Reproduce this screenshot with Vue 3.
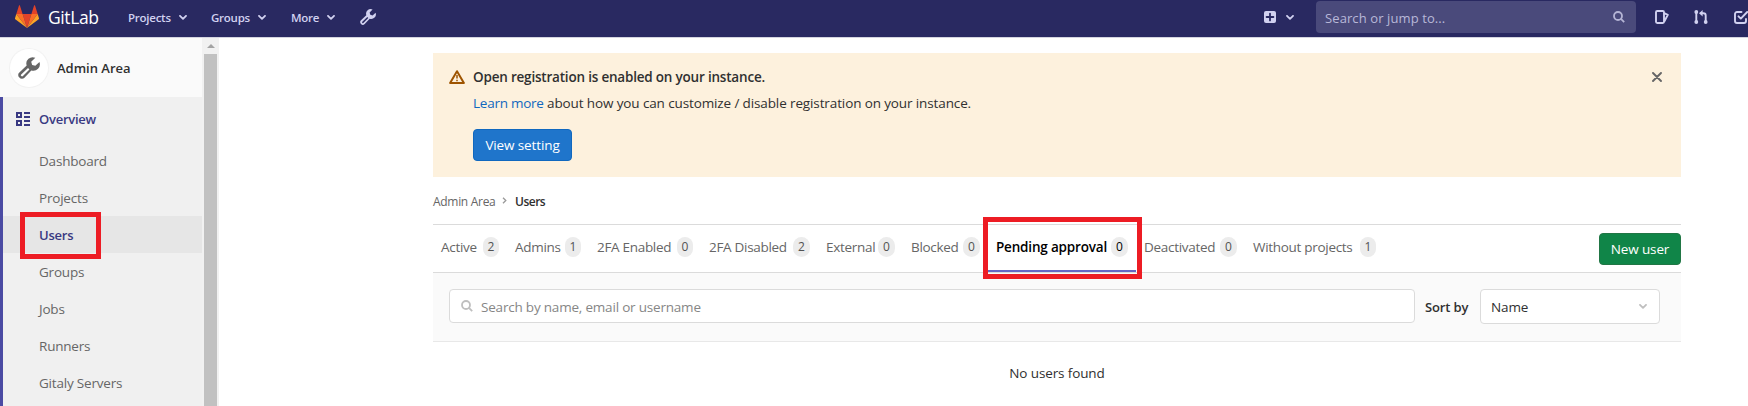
<script setup>
const menus = [
  { label: 'Projects', cls: 'm-projects' },
  { label: 'Groups', cls: 'm-groups' },
  { label: 'More', cls: 'm-more' },
]
const items = ['Dashboard', 'Projects', 'Users', 'Groups', 'Jobs', 'Runners', 'Gitaly Servers']
const tabs = [
  { label: 'Active', count: 2, width: 74, badge: 16 },
  { label: 'Admins', count: 1, width: 82, badge: 16 },
  { label: '2FA Enabled', count: 0, width: 112, badge: 16 },
  { label: '2FA Disabled', count: 2, width: 117, badge: 17 },
  { label: 'External', count: 0, width: 85, badge: 17 },
  { label: 'Blocked', count: 0, width: 85, badge: 17 },
  { label: 'Pending approval', count: 0, width: 148, badge: 17, active: true },
  { label: 'Deactivated', count: 0, width: 109, badge: 17 },
  { label: 'Without projects', count: 1, width: 139, badge: 16 },
]
const wrench =
  'M12.6 .6 A4.6 4.6 0 0 0 6.3 6.2 L1 11.3 A2.3 2.3 0 0 0 1 14.9 A2.5 2.5 0 0 0 4.7 15 L9.7 9.8 A4.7 4.7 0 0 0 15.6 3.7 L12.6 6.4 L10.3 5.8 L9.6 3.4 Z M7.3 8 L8.3 9 L3.6 13.8 A.8 .8 0 0 1 2.3 12.7 Z'
</script>

<template>
  <div class="app">
    <header class="nav">
      <svg class="logo" viewBox="0 0 24 23">
        <path fill="#e24329" d="M12 23 16.4 9.1H7.6z" />
        <path fill="#fc6d26" d="M12 23 7.6 9.1H1.3z" />
        <path fill="#fca326" d="M1.3 9.1 0 13.3c-.1.4 0 .8.3 1L12 23z" />
        <path fill="#e24329" d="M1.3 9.1h6.3L4.9.5c-.1-.4-.7-.4-.9 0z" />
        <path fill="#fc6d26" d="M12 23 16.4 9.1h6.3z" />
        <path fill="#fca326" d="M22.7 9.1 24 13.3c.1.4 0 .8-.3 1L12 23z" />
        <path fill="#e24329" d="M22.7 9.1h-6.3L19.1.5c.1-.4.7-.4.9 0z" />
      </svg>
      <span class="brand">GitLab</span>
      <a v-for="m in menus" :key="m.label" class="menu" :class="m.cls">
        <span>{{ m.label }}</span>
        <svg class="chev" viewBox="0 0 8 5"><path d="M1 .9 4 3.8 7 .9" /></svg>
      </a>
      <svg class="nav-wrench" viewBox="0 0 16 16"><path fill-rule="evenodd" :d="wrench" /></svg>
      <div class="nav-right">
        <svg class="plus" viewBox="0 0 12 12">
          <rect width="12" height="12" rx="2" fill="#d1d1f0" />
          <path d="M6 2.6v6.8M2.6 6h6.8" stroke="#292961" stroke-width="1.8" stroke-linecap="round" />
        </svg>
        <svg class="chev" viewBox="0 0 8 5"><path d="M1 .9 4 3.8 7 .9" /></svg>
        <div class="jump">
          <span>Search or jump to...</span>
          <svg class="mag" viewBox="0 0 12 12"><circle cx="5" cy="5" r="4" /><path d="m8.2 8.2 3 3" /></svg>
        </div>
        <svg class="tool" viewBox="0 0 14 14">
          <path d="M2.2 1h5.6a1.2 1.2 0 0 1 1.2 1.2v9.6A1.2 1.2 0 0 1 7.800 13H2.200A1.200 1.200 0 0 1 1 11.800V2.200A1.200 1.200 0 0 1 2.200 1zM9.200 3.200l3.600 1.600-3.400 6.600" />
        </svg>
        <svg class="tool merge" viewBox="0 0 14 14">
          <path d="M2.300 2v10M6.500 3.300H9.500a2.200 2.200 0 0 1 2.200 2.200V12" />
          <path class="solid" d="M8.600 0v6.600L5.200 3.300z" />
          <circle class="solid" cx="2.300" cy="2" r="1.900" /><circle class="solid" cx="2.300" cy="12" r="1.900" />
          <circle class="solid" cx="11.700" cy="12" r="1.900" />
        </svg>
        <svg class="tool todo" viewBox="0 0 14 14">
          <path d="M7.500 2H3a2 2 0 0 0-2 2v7a2 2 0 0 0 2 2h7a2 2 0 0 0 2-2V9M4.500 6.300l2.300 2.300L13.200 2" />
        </svg>
      </div>
    </header>

    <div class="body">
      <aside class="side">
        <div class="context">
          <span class="avatar"><svg viewBox="0 0 16 16"><path fill-rule="evenodd" :d="wrench" /></svg></span>
          <span class="context-name">Admin Area</span>
        </div>
        <nav class="menu-list">
          <a class="overview">
            <svg viewBox="0 0 14 14">
              <path d="M1 1h4v4H1zM1 9h4v4H1z" />
              <path d="M8 1h6M8 5h6M8 9h6M8 13h6" />
            </svg>
            <span>Overview</span>
          </a>
          <a v-for="i in items" :key="i" class="item" :class="{ on: i === 'Users' }">{{ i }}</a>
        </nav>
        <div class="mark mark-side"></div>
      </aside>
      <div class="scroll"><i class="up"></i><div class="thumb"></div></div>

      <main class="main">
        <section class="alert">
          <svg class="warn" viewBox="0 0 16 14">
            <path d="M8 1.200 14.900 13H1.100z" fill="none" stroke="#9e5400" stroke-width="2" stroke-linejoin="round" />
            <path d="M8 5v3.600M8 9.800v1.500" stroke="#9e5400" stroke-width="1.500" />
          </svg>
          <div class="alert-body">
            <h2>Open registration is enabled on your instance.</h2>
            <p><a>Learn more</a> about how you can customize / disable registration on your instance.</p>
            <button class="btn blue">View setting</button>
          </div>
          <svg class="close" viewBox="0 0 10 10"><path d="m1 1 8 8M9 1 1 9" /></svg>
        </section>

        <div class="crumbs">
          <span class="c-area">Admin Area</span>
          <svg viewBox="0 0 5 7"><path d="M1 .7 3.800 3.500 1 6.300" /></svg>
          <b>Users</b>
        </div>

        <div class="tabs">
          <a v-for="t in tabs" :key="t.label" class="tab" :class="{ active: t.active }" :style="{ width: t.width + 'px' }">
            <span>{{ t.label }}</span><i class="badge" :style="{ width: t.badge + 'px' }">{{ t.count }}</i>
          </a>
          <button class="btn green">New user</button>
          <div class="mark mark-tab"></div>
        </div>

        <div class="filter">
          <div class="search">
            <svg class="mag" viewBox="0 0 12 12"><circle cx="5" cy="5" r="4" /><path d="m8.200 8.200 3 3" /></svg>
            <span>Search by name, email or username</span>
          </div>
          <span class="sort">Sort by</span>
          <div class="select">
            <span>Name</span>
            <svg class="chev" viewBox="0 0 8 5"><path d="M1 .9 4 3.800 7 .9" /></svg>
          </div>
        </div>
        <p class="empty">No users found</p>
      </main>
    </div>
  </div>
</template>

<style>
body { margin: 0; overflow: hidden; }
</style>

<style scoped>
* { box-sizing: border-box; }
.app { width: 1748px; height: 406px; overflow: hidden; background: #fff; color: #303030; font: 13.5px/20px "Open Sans", "Noto Sans", sans-serif; letter-spacing: -0.12px; }
.app span, .app a, .app button { white-space: nowrap; }
svg { display: block; flex: none; }
.nav { height: 38px; background: #292961; border-bottom: 1px solid #d4d4df; display: flex; align-items: center; color: #d1d1f0; padding: 0 0 5px 15px; }
.logo { width: 24px; height: 23px; }
.brand { width: 52px; margin-left: 9px; padding-top: 1px; font-size: 17.5px; color: #fff; letter-spacing: -0.4px; }
.menu { display: flex; align-items: center; justify-content: space-between; font-size: 11.5px; font-weight: 600; letter-spacing: -0.25px; padding-top: 3px; }
.m-projects { width: 59px; margin-left: 28px; }
.m-groups { width: 55px; margin-left: 24px; }
.m-more { width: 44px; margin-left: 25px; }
.chev { width: 8px; height: 5px; }
.chev path { fill: none; stroke: #d1d1f0; stroke-width: 1.8; stroke-linecap: round; stroke-linejoin: round; }
.nav-wrench { width: 16px; height: 16px; margin-left: 25px; fill: #d1d1f0; margin-top: 2px; }
.nav-right { margin-left: auto; display: flex; align-items: center; width: 484px; padding-top: 2px; }
.plus { width: 12px; height: 12px; margin-right: 10px; }
.jump { width: 320px; height: 32px; margin: 0 19px 0 22px; padding: 1px 11px 0 9px; border-radius: 4px; background: #4a4a7b; color: #b8b8d8; display: flex; align-items: center; justify-content: space-between; font-size: 13px; letter-spacing: 0.1px; }
.mag { width: 12px; height: 12px; margin-top: -2px; fill: none; stroke: #b5b5d5; stroke-width: 1.8; }
.tool { width: 14px; height: 14px; fill: none; stroke: #d1d1f0; stroke-width: 1.9; stroke-linejoin: round; stroke-linecap: round; }
.solid { fill: #d1d1f0; stroke: none; }
.merge { margin-left: 25px; }
.todo { margin-left: 26px; }

.body { display: flex; height: 368px; }
.side { position: relative; width: 202px; background: #f0f0f0; }
.context { height: 59px; background: #fafafa; display: flex; align-items: center; padding-left: 10px; }
.avatar { width: 38px; height: 38px; border-radius: 50%; background: #fff; box-shadow: 0 0 0 1px #f2f2f2; display: grid; place-items: center; }
.avatar svg { width: 22px; height: 22px; fill: #666; }
.context-name { margin-left: 9px; font-weight: 600; font-size: 13px; letter-spacing: 0; }
.menu-list { border-left: 3px solid #4b4ba3; height: 309px; }
.overview { height: 45px; display: flex; align-items: center; padding: 0 0 1px 13px; color: #393982; font-weight: 600; font-size: 13px; letter-spacing: -0.25px; }
.overview svg { width: 14px; height: 14px; margin-right: 9px; fill: none; stroke: #393982; stroke-width: 2; }
.item { display: flex; align-items: center; height: 37px; padding-left: 36px; color: #666; letter-spacing: -0.2px; }
.item.on { background: #e6e6e6; color: #393982; font-weight: 600; font-size: 13px; }
.mark { position: absolute; border: 5px solid #ed1c24; }
.mark-side { left: 20px; top: 174px; width: 81px; height: 47px; }
.scroll { width: 17px; background: #f1f1f1; display: flex; flex-direction: column; align-items: center; }
.up { margin: 6px 0 6px; border: 4px solid transparent; border-top: 0; border-bottom-color: #a3a3a3; }
.thumb { width: 13px; flex: 1; background: #c1c1c1; }

.main { width: 1248px; margin-left: 214px; padding-top: 15px; }
.alert { height: 124px; background: #fdf1dd; display: flex; padding: 14px 19px 0 16px; }
.warn { width: 16px; height: 14px; margin-top: 3px; }
.alert-body { flex: 1; padding-left: 8px; }
h2 { margin: 0; font-size: 13.5px; line-height: 20px; font-weight: 600; letter-spacing: -0.2px; }
p { margin: 6px 0 16px; }
p a { color: #1068bf; letter-spacing: -0.25px; }
.btn { display: block; border: 1px solid #1068bf; border-radius: 4px; height: 32px; padding: 0; color: #fff; font: inherit; letter-spacing: inherit; }
.blue { width: 99px; background: #1f75cb; }
.close { width: 10px; height: 10px; margin: 5px 0 0; stroke: #666; stroke-width: 1.900; stroke-linecap: round; }
.crumbs { height: 47px; display: flex; align-items: center; font-size: 12px; letter-spacing: -0.3px; color: #666; padding-top: 2px; }
.c-area { width: 69px; }
.crumbs svg { width: 5px; height: 7px; margin-right: 8px; margin-top: -2px; fill: none; stroke: #999; stroke-width: 1.300; }
.crumbs b { font-weight: 600; color: #303030; letter-spacing: -0.5px; }
.tabs { position: relative; height: 49px; border: solid #dbdbdb; border-width: 1px 0; display: flex; align-items: center; }
.tab { height: 47px; padding: 0 8px 4px; display: flex; align-items: center; justify-content: space-between; color: #666; letter-spacing: -0.3px; }
.tab.active { color: #000; font-weight: 600; border-bottom: 2px solid #6666c4; padding-bottom: 2px; letter-spacing: -0.18px; }
.badge { height: 20px; border-radius: 9px; background: #ececec; font-style: normal; font-size: 12px; text-align: center; color: #525252; font-weight: 400; letter-spacing: 0; }
.active .badge { color: #000; }
.green { width: 82px; margin-left: auto; background: #108548; border-color: #217645; }
.mark-tab { left: 550px; top: -8px; width: 159px; height: 62px; }
.filter { height: 69px; background: #fafafa; border-bottom: 1px solid #e8e8e8; display: flex; align-items: flex-start; padding: 16px 21px 0 16px; }
.search { width: 966px; height: 34px; background: #fff; border: 1px solid #dbdbdb; border-radius: 4px; display: flex; align-items: center; padding: 1px 0 0 11px; color: #868686; letter-spacing: -0.2px; }
.search .mag { stroke: #bfbfbf; margin-right: 8px; }
.sort { width: 65px; padding: 8px 0 0 10px; font-weight: 600; font-size: 13px; }
.select { width: 180px; height: 35px; background: #fff; border: 1px solid #dbdbdb; border-radius: 4px; display: flex; align-items: center; justify-content: space-between; padding: 1px 12px 0 10px; }
.select .chev { margin-top: -2px; }
.select .chev path { stroke: #bfbfbf; }
.empty { margin: 21px 0 0; text-align: center; }
</style>
